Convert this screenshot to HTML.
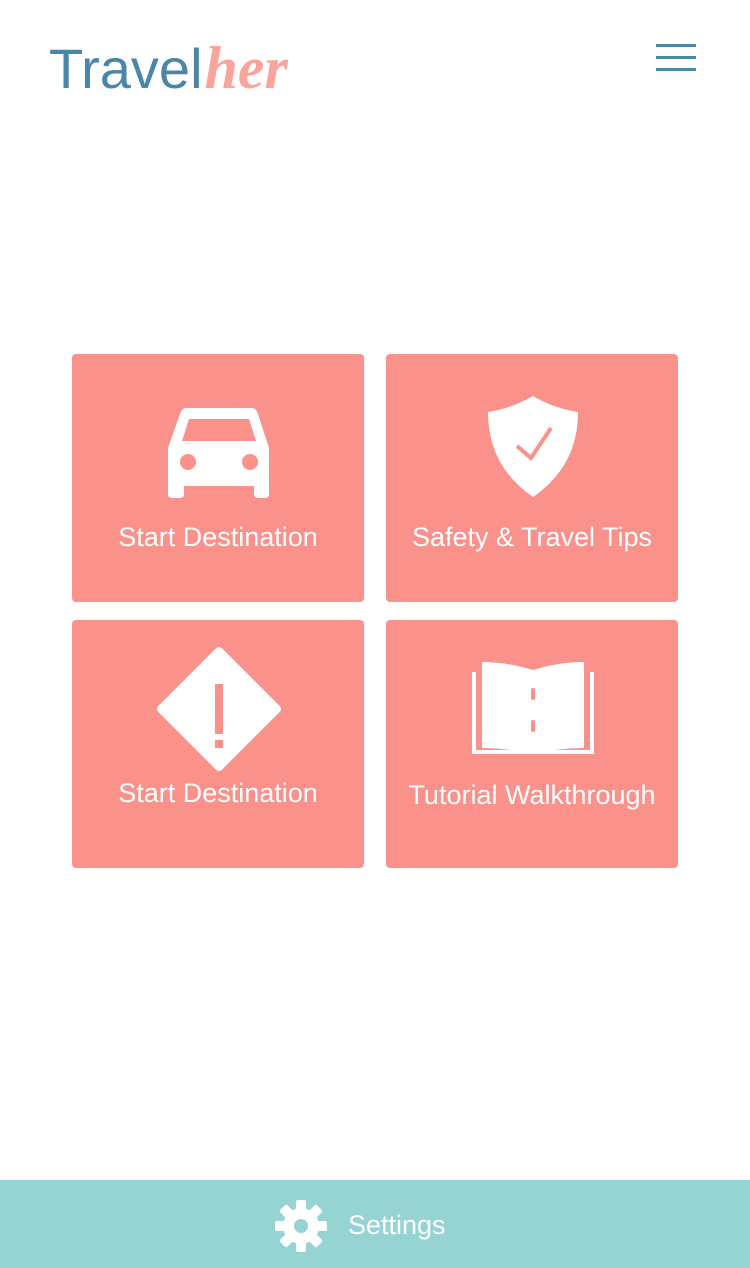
<!DOCTYPE html>
<html><head><meta charset="utf-8"><style>
body{margin:0;width:750px;height:1268px;background:#fff;position:relative;font-family:"Liberation Sans",sans-serif;overflow:hidden}
.logo{position:absolute;left:49px;top:34px;font-size:56px;color:#4a86a8;letter-spacing:0px;font-weight:300}
.logo i{color:#fca49c;font-family:"Liberation Serif",serif;font-weight:bold;font-style:italic;font-size:60px;margin-left:2px}
.menu{position:absolute;left:656px;width:40px;height:3px;background:#4a86a8}
.tile{position:absolute;width:292px;height:248px;background:#fa918a;border-radius:4px}
.tile span{position:absolute;left:0;right:0;text-align:center;color:#fff;font-size:27px}
.bar{position:absolute;left:0;top:1180px;width:750px;height:88px;background:#96d3d3}
</style></head><body>
<div class="logo">Travel<i>her</i></div>
<div class="menu" style="top:44px"></div><div class="menu" style="top:56px"></div><div class="menu" style="top:68px"></div>

<div class="tile" style="left:72px;top:354px"><span style="top:168px">Start Destination</span>
<svg style="position:absolute;left:96px;top:54px" width="102" height="90" viewBox="0 0 102 90"><path fill="#fff" d="M18 0H84Q88 0 90 6L101 40V86Q101 90 97 90H90Q86 90 86 86V78H16V86Q16 90 12 90H5Q0 90 0 86V40L12 6Q14 0 18 0ZM21 11L14 33H88L81 11Z"/><circle cx="20" cy="54" r="8" fill="#fa918a"/><circle cx="82" cy="54" r="8" fill="#fa918a"/></svg></div>

<div class="tile" style="left:386px;top:354px"><span style="top:168px">Safety &amp; Travel Tips</span>
<svg style="position:absolute;left:102px;top:42px" width="90" height="102" viewBox="0 0 90 102"><path fill="#fff" d="M45 0Q25 12 0 16Q0 70 45 101Q90 70 90 16Q65 12 45 0Z"/><path fill="none" stroke="#fa918a" stroke-width="4" d="M29 50L43 62L63 32"/></svg></div>

<div class="tile" style="left:72px;top:620px"><span style="top:158px">Start Destination</span>
<svg style="position:absolute;left:82px;top:24px" width="130" height="130" viewBox="-4 -4 130 130"><path fill="#fff" d="M61 3L119 61L61 119L3 61Z" stroke="#fff" stroke-width="8" stroke-linejoin="round"/><rect x="57" y="36" width="8" height="50" fill="#fa918a"/><rect x="57" y="92" width="8" height="8" fill="#fa918a"/></svg></div>

<div class="tile" style="left:386px;top:620px"><span style="top:160px">Tutorial Walkthrough</span>
<svg style="position:absolute;left:86px;top:42px" width="122" height="94" viewBox="0 0 122 94"><path fill="none" stroke="#fff" stroke-width="4" d="M2 10V90H120V10"/><path fill="#fff" d="M10 0Q35 0 61 8Q87 0 112 0V86Q87 86 61 92Q35 86 10 86Z"/><rect x="59" y="26" width="4" height="12" rx="2" fill="#fa918a"/><rect x="59" y="58" width="4" height="12" rx="2" fill="#fa918a"/></svg></div>

<div class="bar">
<svg style="position:absolute;left:275px;top:20px" width="52" height="52" viewBox="-26 -26 52 52"><g fill="#fff"><circle r="18"/><g id="t"><rect x="-5" y="-26" width="10" height="12" rx="2"/></g><use href="#t" transform="rotate(45)"/><use href="#t" transform="rotate(90)"/><use href="#t" transform="rotate(135)"/><use href="#t" transform="rotate(180)"/><use href="#t" transform="rotate(225)"/><use href="#t" transform="rotate(270)"/><use href="#t" transform="rotate(315)"/></g><circle r="7" fill="#96d3d3"/></svg>
<div style="position:absolute;left:348px;top:30px;color:#fff;font-size:27px">Settings</div>
</div>
</body></html>
